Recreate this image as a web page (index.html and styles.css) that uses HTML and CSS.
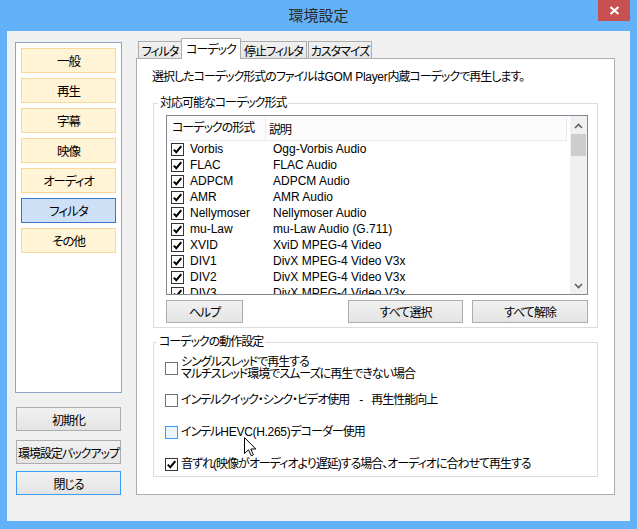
FILE: index.html
```html
<!DOCTYPE html>
<html lang="ja">
<head>
<meta charset="utf-8">
<title>環境設定</title>
<link rel="stylesheet" href="styles.css">
</head>
<body>
<div class="window">
  <div class="titlebar">
    <span class="title">環境設定</span>
    <div class="close"><svg width="11" height="9" viewBox="0 0 11 9"><path d="M1.5 1 L9.5 8 M9.5 1 L1.5 8" stroke="#fff" stroke-width="2.2"/></svg></div>
  </div>
  <div class="client">
    <div class="leftcol">
      <div class="navpanel">
        <div class="navbtn">一般</div>
        <div class="navbtn">再生</div>
        <div class="navbtn">字幕</div>
        <div class="navbtn">映像</div>
        <div class="navbtn">オーディオ</div>
        <div class="navbtn active">フィルタ</div>
        <div class="navbtn">その他</div>
      </div>
      <div class="btn sidebtn first">初期化</div>
      <div class="btn sidebtn second">環境設定バックアップ</div>
      <div class="btn sidebtn third default">閉じる</div>
    </div>
    <div class="rightcol">
      <div class="tabs">
        <div class="tab t1">フィルタ</div>
        <div class="tab t2 selected">コーデック</div>
        <div class="tab t3">停止フィルタ</div>
        <div class="tab t4">カスタマイズ</div>
      </div>
      <div class="tabpanel">
        <p class="desc">選択したコーデック形式のファイルは<span class="lat">GOM Player</span>内蔵コーデックで再生します。</p>
        <fieldset class="group g1">
          <legend>対応可能なコーデック形式</legend>
          <div class="listbox">
            <div class="listmain">
              <div class="lhead"><span class="hc1">コーデックの形式</span><span class="hc2">説明</span></div>
              <div class="rows">
                <div class="row"><span class="cb checked"><svg width="11" height="11" viewBox="0 0 11 11"><path d="M1.8 5.6 L4.3 8.2 L9.3 2.2" fill="none" stroke="#000" stroke-width="2"/></svg></span><span class="name">Vorbis</span><span class="info">Ogg-Vorbis Audio</span></div>
                <div class="row"><span class="cb checked"><svg width="11" height="11" viewBox="0 0 11 11"><path d="M1.8 5.6 L4.3 8.2 L9.3 2.2" fill="none" stroke="#000" stroke-width="2"/></svg></span><span class="name">FLAC</span><span class="info">FLAC Audio</span></div>
                <div class="row"><span class="cb checked"><svg width="11" height="11" viewBox="0 0 11 11"><path d="M1.8 5.6 L4.3 8.2 L9.3 2.2" fill="none" stroke="#000" stroke-width="2"/></svg></span><span class="name">ADPCM</span><span class="info">ADPCM Audio</span></div>
                <div class="row"><span class="cb checked"><svg width="11" height="11" viewBox="0 0 11 11"><path d="M1.8 5.6 L4.3 8.2 L9.3 2.2" fill="none" stroke="#000" stroke-width="2"/></svg></span><span class="name">AMR</span><span class="info">AMR Audio</span></div>
                <div class="row"><span class="cb checked"><svg width="11" height="11" viewBox="0 0 11 11"><path d="M1.8 5.6 L4.3 8.2 L9.3 2.2" fill="none" stroke="#000" stroke-width="2"/></svg></span><span class="name">Nellymoser</span><span class="info">Nellymoser Audio</span></div>
                <div class="row"><span class="cb checked"><svg width="11" height="11" viewBox="0 0 11 11"><path d="M1.8 5.6 L4.3 8.2 L9.3 2.2" fill="none" stroke="#000" stroke-width="2"/></svg></span><span class="name">mu-Law</span><span class="info">mu-Law Audio (G.711)</span></div>
                <div class="row"><span class="cb checked"><svg width="11" height="11" viewBox="0 0 11 11"><path d="M1.8 5.6 L4.3 8.2 L9.3 2.2" fill="none" stroke="#000" stroke-width="2"/></svg></span><span class="name">XVID</span><span class="info">XviD MPEG-4 Video</span></div>
                <div class="row"><span class="cb checked"><svg width="11" height="11" viewBox="0 0 11 11"><path d="M1.8 5.6 L4.3 8.2 L9.3 2.2" fill="none" stroke="#000" stroke-width="2"/></svg></span><span class="name">DIV1</span><span class="info">DivX MPEG-4 Video V3x</span></div>
                <div class="row"><span class="cb checked"><svg width="11" height="11" viewBox="0 0 11 11"><path d="M1.8 5.6 L4.3 8.2 L9.3 2.2" fill="none" stroke="#000" stroke-width="2"/></svg></span><span class="name">DIV2</span><span class="info">DivX MPEG-4 Video V3x</span></div>
                <div class="row"><span class="cb checked"><svg width="11" height="11" viewBox="0 0 11 11"><path d="M1.8 5.6 L4.3 8.2 L9.3 2.2" fill="none" stroke="#000" stroke-width="2"/></svg></span><span class="name">DIV3</span><span class="info">DivX MPEG-4 Video V3x</span></div>
              </div>
            </div>
            <div class="scrollbar">
              <div class="sarrow"><svg width="9" height="6" viewBox="0 0 9 6"><path d="M1 5 L4.5 1.5 L8 5" fill="none" stroke="#606060" stroke-width="1.6"/></svg></div>
              <div class="thumb"></div>
              <div class="strack"></div>
              <div class="sarrow"><svg width="9" height="6" viewBox="0 0 9 6"><path d="M1 1 L4.5 4.5 L8 1" fill="none" stroke="#606060" stroke-width="1.6"/></svg></div>
            </div>
          </div>
          <div class="btnrow">
            <div class="btn b-help">ヘルプ</div>
            <div class="spacer"></div>
            <div class="btn b-all">すべて選択</div>
            <div class="btn b-none">すべて解除</div>
          </div>
        </fieldset>
        <fieldset class="group g2">
          <legend>コーデックの動作設定</legend>
          <div class="opt o1"><span class="cb"></span><span class="otext">シングルスレッドで再生する<br>マルチスレッド環境でスムーズに再生できない場合</span></div>
          <div class="opt o2"><span class="cb"></span><span class="otext">インテルクイック・シンク・ビデオ使用<span class="dash">-</span>再生性能向上</span></div>
          <div class="opt o3"><span class="cb hover"></span><span class="otext">インテル<span class="lat">HEVC(H.265)</span>デコーダー使用</span></div>
          <div class="opt o4"><span class="cb checked"><svg width="11" height="11" viewBox="0 0 11 11"><path d="M1.8 5.6 L4.3 8.2 L9.3 2.2" fill="none" stroke="#000" stroke-width="2"/></svg></span><span class="otext">音ずれ(映像がオーディオより遅延)する場合、オーディオに合わせて再生する</span></div>
        </fieldset>
      </div>
    </div>
  </div>
  <svg class="cursor" width="13" height="20" viewBox="0 0 13 20"><path d="M0.5 0.5 L0.5 16.5 L4.5 12.8 L7.2 18.8 L9.4 17.8 L6.8 12 L11.8 12 Z" fill="#fff" stroke="#000" stroke-width="1"/></svg>
</div>
</body>
</html>
```
FILE: styles.css
```css
* { box-sizing: border-box; }
html, body { margin: 0; padding: 0; }
body {
  font-family: "Liberation Sans", "Noto Sans CJK JP", sans-serif;
  font-size: 12px;
  color: #000;
  font-feature-settings: "palt" 1;
  letter-spacing: -1px;
}
.lat { letter-spacing: -0.3px; }
.window {
  width: 637px;
  height: 529px;
  background: #63b1f8;
  position: relative;
  overflow: hidden;
}
.titlebar {
  height: 31px;
  display: grid;
  grid-template-columns: 1fr auto 1fr;
}
.title {
  grid-column: 2;
  font-family: "Noto Sans CJK JP", sans-serif;
  font-size: 15px;
  letter-spacing: 0;
  line-height: 30px;
  color: #2a2a2a;
}
.close {
  grid-column: 3;
  justify-self: end;
  margin-right: 7px;
  width: 32px;
  height: 21px;
  background: #c75050;
  display: flex;
  align-items: center;
  justify-content: center;
}
.client {
  margin: 0 7px;
  height: 490px;
  background: #f0f0f0;
  display: flex;
  padding-left: 8px;
}
.leftcol {
  width: 107px;
  padding-top: 11px;
}
.navpanel {
  height: 351px;
  background: #fff;
  border: 1px solid #8ea6c6;
  padding: 5px;
  display: flex;
  flex-direction: column;
  gap: 5px;
}
.navbtn {
  height: 25px;
  background: #fff5d6;
  border: 1px solid #fbd899;
  display: flex;
  align-items: center;
  justify-content: center;
  font-size: 12.5px;
}
.navbtn.active {
  background: #cde0f6;
  border-color: #3b77c7;
}
.btn {
  height: 24px;
  background: linear-gradient(#f1f1f1, #e4e4e4);
  border: 1px solid #adadad;
  display: flex;
  align-items: center;
  justify-content: center;
  white-space: nowrap;
}
.sidebtn {
  width: 105px;
  margin-left: 1px;
  font-size: 12px;
}
.sidebtn.first { margin-top: 14px; }
.sidebtn.second { margin-top: 9px; }
.sidebtn.third { margin-top: 7px; }
.sidebtn.default { border-color: #3c9bf2; }
.rightcol {
  margin-left: 14px;
  width: 479px;
  padding-top: 8px;
}
.tabs {
  height: 19px;
  display: flex;
  align-items: flex-end;
  padding-left: 2px;
  position: relative;
  z-index: 1;
}
.tab {
  height: 17px;
  border: 1px solid #adadad;
  border-bottom: none;
  background: linear-gradient(#f1f1f1, #e5e5e5);
  display: flex;
  align-items: center;
  justify-content: center;
  padding-top: 1px;
  white-space: nowrap;
}
.tab.t1 { width: 44px; }
.tab.t2 { width: 60px; }
.tab.t3 { width: 67px; }
.tab.t4 { width: 64px; margin-left: 1px; }
.tab.selected {
  height: 21px;
  margin-bottom: -1px;
  background: #fff;
  margin-left: -1px;
  margin-right: -1px;
  padding-top: 0;
  padding-bottom: 2px;
  position: relative;
  z-index: 2;
}
.tabpanel {
  height: 437px;
  background: #fff;
  border: 1px solid #adadad;
  padding: 11px 0 0 15px;
}
.desc {
  margin: 0;
  line-height: 14px;
}
.group {
  margin: 0 0 0 1px;
  width: 445px;
  border: 1px solid #dcdcdc;
  min-width: 0;
}
.group legend {
  padding: 0 2px;
  margin-left: -8px;
  line-height: 14px;
}
.g1 {
  margin-top: 12px;
  padding: 5px 9px 4px 12px;
}
.listbox {
  height: 180px;
  border: 1px solid #828790;
  display: flex;
  overflow: hidden;
}
.listmain {
  width: 402px;
  overflow: hidden;
}
.lhead {
  height: 25px;
  width: 400px;
  background: #fcfcfc;
  border-bottom: 1px solid #e3ecf7;
  border-right: 1px solid #e3ecf7;
  display: flex;
  align-items: center;
}
.hc1 {
  width: 99px;
  padding-left: 5px;
  border-right: 1px solid #e3ecf7;
  height: 24px;
  line-height: 24px;
}
.hc2 { padding-left: 3px; }
.row {
  height: 16px;
  display: flex;
  align-items: center;
  padding-left: 4px;
  white-space: nowrap;
  letter-spacing: 0;
}
.cb {
  width: 13px;
  height: 13px;
  border: 1px solid #707070;
  background: #fff;
  display: flex;
  align-items: center;
  justify-content: center;
  flex-shrink: 0;
}
.cb.checked { border-color: #333; }
.cb.hover { border-color: #3c9bf2; background: #eaf4fd; }
.name { width: 83px; margin-left: 6px; }
.scrollbar {
  width: 17px;
  margin-left: 1px;
  background: #f0f0f0;
  display: flex;
  flex-direction: column;
  padding-top: 1px;
}
.sarrow {
  height: 17px;
  display: flex;
  align-items: center;
  justify-content: center;
  flex-shrink: 0;
}
.thumb {
  height: 22px;
  margin: 0 1px;
  background: #cdcdcd;
}
.strack { flex: 1; }
.btnrow {
  margin-top: 5px;
  display: flex;
  gap: 9px;
}
.btnrow .btn { height: 23px; }
.b-help { width: 77px; }
.spacer { flex: 1; }
.b-all { width: 115px; }
.b-none { width: 116px; }
.g2 {
  margin-top: 7px;
  padding: 0 9px 5px 11px;
}
.opt {
  display: flex;
  align-items: center;
  gap: 3px;
}
.otext { line-height: 12px; white-space: nowrap; }
.dash { display: inline-block; margin: 0 9px 0 10px; }
.o1 { margin-top: 7px; }
.o2 { margin-top: 13px; }
.o3 { margin-top: 18px; }
.o4 { margin-top: 18px; }
.o2 .otext, .o3 .otext, .o4 .otext { line-height: 14px; }
.cursor {
  position: absolute;
  left: 244px;
  top: 437px;
}
```
